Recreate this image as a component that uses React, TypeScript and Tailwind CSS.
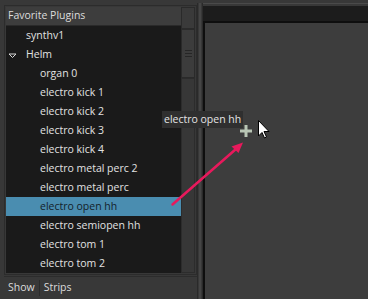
const items = [
  "organ 0",
  "electro kick 1",
  "electro kick 2",
  "electro kick 3",
  "electro kick 4",
  "electro metal perc 2",
  "electro metal perc",
  "electro open hh",
  "electro semiopen hh",
  "electro tom 1",
  "electro tom 2",
];

function Row({ label, indent, selected }: { label: string; indent: string; selected?: boolean }) {
  return (
    <div
      className={`flex h-[19px] items-center ${indent} ${
        selected ? "bg-[#4a8db0] text-[#14222a]" : "text-[#e2e2e2]"
      }`}
    >
      {label}
    </div>
  );
}

export default function App() {
  return (
    <div
      className="relative flex h-[299px] w-[368px] overflow-hidden bg-[#383838] text-[10.5px]"
      style={{ fontFamily: '"Open Sans", "DejaVu Sans", sans-serif' }}
    >
      {/* left dock */}
      <div className="flex w-[197px] flex-col pl-[4px] pt-[5px]">
        <div className="flex h-[270px] border border-[#2c2c2c] p-[1px]">
          <div className="flex w-[176px] flex-col">
            <div className="flex h-[19px] items-center border-b border-[#2a2a2a] bg-[#3d3d3d] pl-[2px] text-[#dcdcdc]">
              Favorite Plugins
            </div>
            <div className="flex-1 bg-[#1a1a1a]">
              <Row label="synthv1" indent="pl-[20px]" />
              <div className="flex h-[19px] items-center text-[#e2e2e2]">
                <svg width="20" height="19" viewBox="0 0 20 19" className="shrink-0">
                  <path d="M3 9h7l-3.5 3.5z" fill="none" stroke="#d8d8d8" strokeWidth="1" />
                </svg>
                Helm
              </div>
              {items.map((it) => (
                <Row key={it} label={it} indent="pl-[34px]" selected={it === "electro open hh"} />
              ))}
            </div>
          </div>
          {/* scrollbar */}
          <div className="flex w-[14px] flex-col bg-[#353535]">
            <div className="h-[22px] border border-[#2a2a2a] bg-[#3a3a3a]" />
            <div className="flex h-[49px] flex-col items-center justify-center gap-[2px] border border-[#2a2a2a] bg-[#3c3c3c]">
              <div className="h-px w-[7px] bg-[#262626]" />
              <div className="h-px w-[7px] bg-[#262626]" />
              <div className="h-px w-[7px] bg-[#262626]" />
            </div>
            <div className="flex-1 border border-[#2c2c2c] bg-[#373737]" />
          </div>
        </div>
        <div className="mt-[1px] flex h-[23px] items-center border-t border-[#2c2c2c] pl-[4px] text-[#dcdcdc]">
          <span>Show</span>
          <div className="mx-[4px] h-[16px] w-px bg-[#2a2a2a]" />
          <span>Strips</span>
        </div>
      </div>
      {/* splitter */}
      <div className="flex w-[6px] gap-[1px] pt-[3px]">
        <div className="h-full w-px bg-[#2a2a2a]" />
        <div className="h-full w-[2px] bg-[#454545]" />
        <div className="h-full w-px bg-[#2a2a2a]" />
      </div>
      {/* right area */}
      <div className="flex flex-1 flex-col pt-[3px]">
        <div className="h-[3px] border-t border-[#4a4a4a]" />
        <div className="h-[15px] bg-[#1c1c1c]" />
        <div className="flex-1 border-l-2 border-t-2 border-[#0e0e0e] bg-[#3d3d3d]" />
      </div>

      {/* drag overlay */}
      <div className="absolute left-[162px] top-[111px] flex h-[17px] items-center bg-[#2f2f2f] px-[2px] text-[#e4e4e4]">
        electro open hh
      </div>
      <svg className="absolute left-0 top-0" width="368" height="299" viewBox="0 0 368 299">
        <path d="M240 131h12M246 125v12" stroke="#b9c6b5" strokeWidth="3" />
        <path d="M172.5 204.5L236 149" stroke="#e8195c" strokeWidth="2.5" strokeLinecap="round" />
        <path d="M243 142.5L231.5 146.5L238.5 153z" fill="#e8195c" />
        <path
          d="M258.5 120.5v15.5l3.5-3.5 2.5 5.5 2-1-2.5-5.5h5z"
          fill="#ffffff"
          stroke="#000000"
          strokeWidth="1"
          strokeLinejoin="round"
        />
      </svg>
    </div>
  );
}
